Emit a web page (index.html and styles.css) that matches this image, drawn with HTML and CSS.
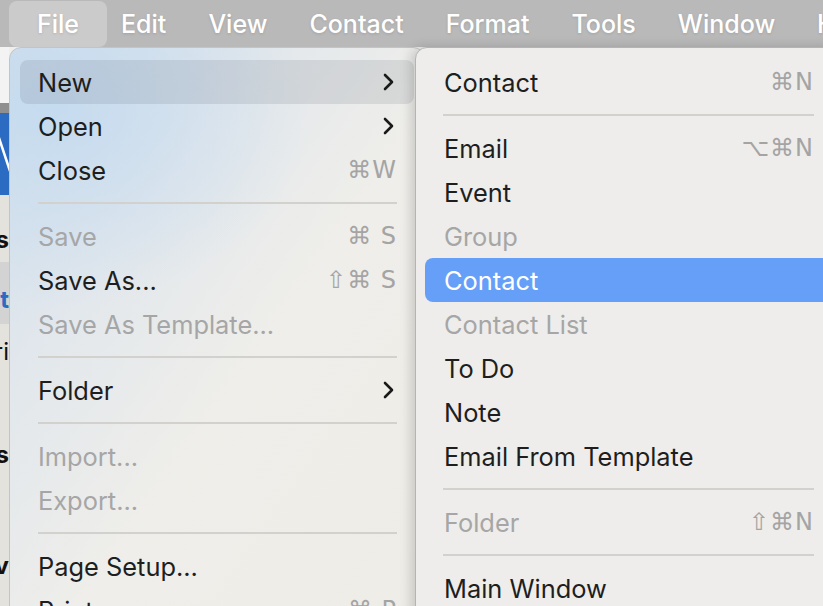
FILE: index.html
```html
<!DOCTYPE html>
<html lang="en">

<head>
  <meta charset="UTF-8">
  <title>File menu</title>
  <link rel="stylesheet" href="styles.css">
</head>

<body>
  <div class="menubar">
    <span class="bar-item active">File</span>
    <span class="bar-item">Edit</span>
    <span class="bar-item">View</span>
    <span class="bar-item">Contact</span>
    <span class="bar-item">Format</span>
    <span class="bar-item">Tools</span>
    <span class="bar-item">Window</span>
    <span class="bar-item">Help</span>
  </div>

  <div class="desk">
    <!-- the window behind the menus, only a sliver shows -->
    <div class="window">
      <div class="win-top"></div>
      <div class="win-line"></div>
      <div class="win-blue">
        <svg viewBox="0 0 9 82" width="9" height="82"><path d="M-2 22L10 58"/></svg>
      </div>
      <div class="win-row tall"><b>Contacts</b></div>
      <div class="win-row sel"><span>Contact</span></div>
      <div class="win-row cat"><span>Categori</span></div>
      <div class="win-row groups"><b>Groups</b></div>
      <div class="win-row nav"><b>Nav</b></div>
    </div>

    <div class="menu main">
      <div class="item hover">New <svg class="chev" viewBox="0 0 12 18"><path d="M2 2l7 7-7 7"/></svg></div>
      <div class="item">Open <svg class="chev" viewBox="0 0 12 18"><path d="M2 2l7 7-7 7"/></svg></div>
      <div class="item">Close <span class="key">⌘W</span></div>
      <div class="sep"></div>
      <div class="item off">Save <span class="key">⌘ S</span></div>
      <div class="item">Save As... <span class="key">⇧⌘ S</span></div>
      <div class="item off">Save As Template...</div>
      <div class="sep"></div>
      <div class="item">Folder <svg class="chev" viewBox="0 0 12 18"><path d="M2 2l7 7-7 7"/></svg></div>
      <div class="sep"></div>
      <div class="item off">Import...</div>
      <div class="item off">Export...</div>
      <div class="sep"></div>
      <div class="item">Page Setup...</div>
      <div class="item">Print <span class="key">⌘ P</span></div>
    </div>

    <div class="menu sub">
      <div class="item">Contact <span class="key">⌘N</span></div>
      <div class="sep"></div>
      <div class="item">Email <span class="key">⌥⌘N</span></div>
      <div class="item">Event</div>
      <div class="item off">Group</div>
      <div class="item picked">Contact</div>
      <div class="item off">Contact List</div>
      <div class="item">To Do</div>
      <div class="item">Note</div>
      <div class="item">Email From Template</div>
      <div class="sep"></div>
      <div class="item off">Folder <span class="key">⇧⌘N</span></div>
      <div class="sep"></div>
      <div class="item">Main Window</div>
    </div>
  </div>
</body>
</html>
```

FILE: styles.css
```css
html, body {
  margin: 0;
  height: 100%;
  overflow: hidden;
}

body {
  font-family: Inter, "Liberation Sans", sans-serif;
  background: #efeeea;
}

.menubar {
  height: 47px;
  background: #b9b9b9;
  display: flex;
  align-items: center;
  padding-left: 16px;
  white-space: nowrap;
}

.bar-item {
  color: #fff;
  font-size: 25px;
  font-weight: 500;
  padding: 0 28px;
  margin: 0 -7px;
  height: 46px;
  line-height: 46px;
  border-radius: 8px;
  text-shadow: 0 1px 3px rgba(0, 0, 0, 0.12);
}

.bar-item.active {
  background: #cbcbcb;
}

.desk {
  display: flex;
  align-items: flex-start;
  height: 559px;
}

.window {
  width: 9px;
  flex-shrink: 0;
  height: 100%;
  background: #e4e2dd;
  overflow: hidden;
  font-size: 24px;
  display: flex;
  flex-direction: column;
}

.win-top {
  height: 56px;
  flex-shrink: 0;
  background: #f3f3f3;
}

.win-line {
  height: 10px;
  flex-shrink: 0;
  background: #8f8f8f;
}

.win-blue {
  height: 82px;
  flex-shrink: 0;
  background: #2c6bc2;
}

.win-blue svg {
  display: block;
}

.win-blue path {
  stroke: #fff;
  stroke-width: 2.5;
  fill: none;
}

.win-row {
  box-sizing: border-box;
  flex-shrink: 0;
  height: 40px;
  line-height: 40px;
  display: flex;
  justify-content: flex-end;
  align-items: flex-start;
  white-space: nowrap;
  color: #111;
}

.win-row.tall {
  height: 67px;
  padding-top: 25px;
}

.win-row.sel {
  height: 62px;
  padding-top: 18px;
  background: #d3d3d3;
  color: #2c6bc2;
  font-weight: 700;
}

.win-row.cat {
  height: 48px;
  padding-top: 8px;
}

.win-row.groups {
  margin-top: 63px;
}

.win-row.nav {
  margin-top: 71px;
}

.menu {
  flex-shrink: 0;
  padding: 11px 10px;
  border: 1px solid #c4c4c4;
  border-radius: 12px 12px 0 0;
  font-size: 25.4px;
  color: #1e1e1e;
}

.menu.main {
  width: 394px;
  height: 600px;
  background:
    radial-gradient(ellipse 260px 200px at 40px 60px, #c5dbef 0%, rgba(205, 222, 238, 0.6) 55%, rgba(239, 238, 234, 0) 100%),
    linear-gradient(125deg, #cfdeec 0%, #e3e8ec 30%, #efeeea 55%, #eeece6 100%);
}

.menu.sub {
  width: 406px;
  height: 600px;
  margin-left: -10px;
  padding-left: 9px;
  background: #eeedeb;
  border-color: #b4b4b4;
  box-shadow: -4px 0 12px rgba(0, 0, 0, 0.16);
}

.item {
  height: 44px;
  padding: 0 17px 0 18px;
  display: flex;
  align-items: center;
  justify-content: space-between;
  border-radius: 8px;
  white-space: nowrap;
}

.menu.main .item:first-child,
.menu.sub .item:first-child {
  margin-top: 1px;
}

.menu.sub .item {
  padding-left: 19px;
}

.item.hover {
  background: rgba(70, 80, 90, 0.13);
}

.item.picked {
  background: #659ff8;
  color: #fff;
}

.item.off {
  color: #a6a6a6;
}

.key {
  color: #a4a4a4;
  font-family: "DejaVu Sans", sans-serif;
  font-size: 24px;
  letter-spacing: 1px;
}

.chev {
  width: 12px;
  height: 18px;
  margin-right: 2px;
}

.chev path {
  fill: none;
  stroke: #1a1a1a;
  stroke-width: 2.6;
  stroke-linecap: round;
  stroke-linejoin: round;
}

.sep {
  height: 2px;
  margin: 10px 17px 10px 18px;
  background: #d2d1cd;
}
```
